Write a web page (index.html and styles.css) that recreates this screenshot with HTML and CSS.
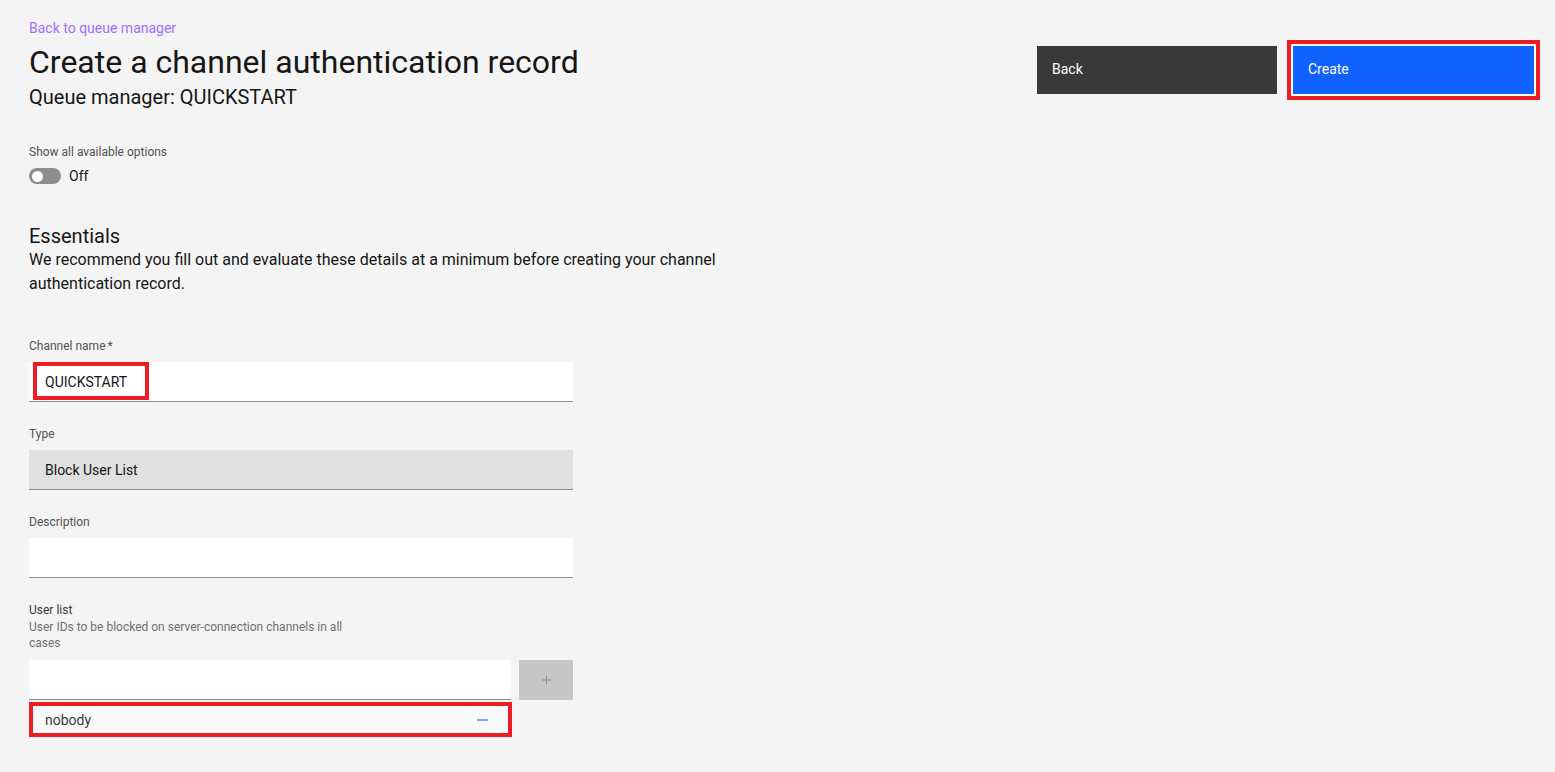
FILE: index.html
```html
<!DOCTYPE html>
<html lang="en">
<head>
<meta charset="utf-8">
<title>Create a channel authentication record</title>
<link rel="stylesheet" href="styles.css">
</head>
<body>
<div class="page">
  <header class="header">
    <div class="header-text">
      <a class="back-link" href="#">Back to queue manager</a>
      <h1 class="title">Create a channel authentication record</h1>
      <p class="subtitle">Queue manager: QUICKSTART</p>
    </div>
    <div class="actions">
      <button class="btn btn-secondary" type="button">Back</button>
      <button class="btn btn-primary highlight-ring" type="button">Create</button>
    </div>
  </header>

  <section class="toggle-group">
    <div class="toggle-label">Show all available options</div>
    <div class="toggle-row">
      <span class="toggle-track"><span class="toggle-knob"></span></span>
      <span class="toggle-state">Off</span>
    </div>
  </section>

  <section class="essentials">
    <h2 class="section-title">Essentials</h2>
    <p class="section-desc">We recommend you fill out and evaluate these details at a minimum before creating your channel authentication record.</p>
  </section>

  <form class="form">
    <div class="field">
      <label class="field-label">Channel name<span class="req">*</span></label>
      <div class="input input-white">
        <span class="input-value">QUICKSTART</span>
        <span class="highlight-box hl-channel"></span>
      </div>
    </div>

    <div class="field">
      <label class="field-label">Type</label>
      <div class="input input-gray">
        <span class="input-value">Block User List</span>
      </div>
    </div>

    <div class="field">
      <label class="field-label">Description</label>
      <div class="input input-white"></div>
    </div>

    <div class="field field-last">
      <label class="field-label label-tight">User list</label>
      <div class="helper">User IDs to be blocked on server-connection channels in all cases</div>
      <div class="add-row">
        <div class="input input-white add-input"></div>
        <button class="add-btn" type="button" aria-label="Add">
          <svg width="16" height="16" viewBox="0 0 16 16"><path d="M8.5 3.5v9M4 8h9" stroke="#8d8d8d" stroke-width="1" fill="none"/></svg>
        </button>
      </div>
      <div class="list-item">
        <span class="list-text">nobody</span>
        <svg class="minus" width="12" height="4" viewBox="0 0 12 4"><rect x="0" y="1" width="11" height="2" fill="#78a9ff"/></svg>
      </div>
    </div>
  </form>
</div>
</body>
</html>
```

FILE: styles.css
```css
* { box-sizing: border-box; }
html, body { margin: 0; padding: 0; }
body {
  background: #f4f4f4;
  color: #161616;
  font-family: Roboto, "Noto Sans", "Liberation Sans", sans-serif;
}
.page {
  padding: 19px 21px 0 29px;
}
.header {
  display: flex;
  justify-content: space-between;
  align-items: flex-start;
}
.header-text {
  display: flex;
  flex-direction: column;
}
.back-link {
  font-size: 14px;
  line-height: 18px;
  color: #a56eff;
  text-decoration: none;
}
.title {
  margin: 5px 0 0;
  font-size: 32px;
  line-height: 40px;
  font-weight: 400;
}
.subtitle {
  margin: 1px 0 0;
  font-size: 20px;
  line-height: 28px;
}
.actions {
  display: flex;
  gap: 16px;
  margin-top: 27px;
}
.btn {
  width: 241px;
  height: 48px;
  border: 0;
  padding: 0 15px 2px;
  text-align: left;
  font-family: inherit;
  font-size: 14px;
  color: #fff;
}
.btn-secondary { background: #393939; width: 240px; }
.btn-primary { background: #0f62fe; }
.highlight-ring {
  box-shadow: 0 0 0 2px #fff, 0 0 0 6px #ec1c24;
}

.toggle-group { margin-top: 33px; }
.toggle-label {
  font-size: 12px;
  line-height: 16px;
  color: #525252;
}
.toggle-row {
  display: flex;
  align-items: center;
  gap: 8px;
  margin-top: 7px;
}
.toggle-track {
  width: 32px;
  height: 16px;
  border-radius: 8px;
  background: #8d8d8d;
  display: flex;
  align-items: center;
  padding-left: 3px;
}
.toggle-knob {
  width: 11px;
  height: 11px;
  border-radius: 50%;
  background: #fff;
}
.toggle-state {
  font-size: 14px;
  line-height: 18px;
}

.essentials { margin-top: 39px; max-width: 720px; }
.section-title {
  margin: 0;
  font-size: 20px;
  line-height: 24px;
  font-weight: 400;
}
.section-desc {
  margin: 0;
  font-size: 16px;
  line-height: 24px;
}

.form { margin-top: 42px; width: 544px; }
.field { margin-bottom: 24px; }
.field-label {
  display: block;
  font-size: 12px;
  line-height: 16px;
  color: #525252;
  margin-bottom: 8px;
}
.req { margin-left: 2px; }
.label-tight { margin-bottom: 0; color: #393939; }
.helper {
  font-size: 12px;
  line-height: 16px;
  color: #6f6f6f;
  width: 345px;
  margin-top: 1px;
  margin-bottom: 9px;
}
.input {
  position: relative;
  height: 40px;
  border-bottom: 1px solid #8d8d8d;
  display: flex;
  align-items: center;
  padding: 0 16px;
  font-size: 14px;
}
.input-white { background: #fff; }
.input-gray { background: #e0e0e0; }
.input-value { color: #161616; }
.highlight-box {
  position: absolute;
  border: 4px solid #ec1c24;
  pointer-events: none;
}
.hl-channel {
  left: 4px;
  top: 0;
  width: 116px;
  height: 38px;
}
.add-row {
  display: flex;
  gap: 8px;
}
.add-input { width: 482px; }
.add-btn {
  width: 54px;
  height: 40px;
  border: 0;
  background: #c6c6c6;
  display: flex;
  align-items: center;
  justify-content: center;
  padding: 0;
}
.list-item {
  margin-top: 2px;
  width: 483px;
  height: 35px;
  border: 4px solid #ec1c24;
  background: #f9f9f9;
  display: flex;
  align-items: center;
  justify-content: space-between;
  padding: 0 19px 0 12px;
  font-size: 14px;
  color: #393939;
}
```
